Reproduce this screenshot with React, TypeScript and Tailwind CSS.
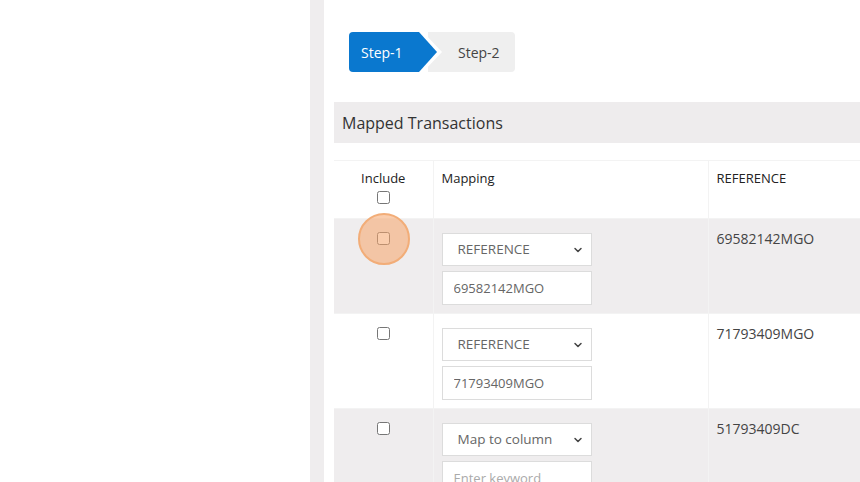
import { ChevronDown } from "lucide-react";

type Row = {
  mapping: string;
  keyword: string;
  reference: string;
  shaded: boolean;
};

const ROWS: Row[] = [
  { mapping: "REFERENCE", keyword: "69582142MGO", reference: "69582142MGO", shaded: true },
  { mapping: "REFERENCE", keyword: "71793409MGO", reference: "71793409MGO", shaded: false },
  { mapping: "Map to column", keyword: "", reference: "51793409DC", shaded: true },
];

function Stepper() {
  return (
    <div className="flex h-10 w-[166px]">
      <div className="relative z-10 h-10 w-[93px] shrink-0 bg-white [clip-path:polygon(0_0,calc(100%-19px)_0,100%_50%,calc(100%-19px)_100%,0_100%)]">
        <div className="flex h-10 w-[88px] items-center rounded-l-[4px] bg-[#0a78cf] pl-3 text-[14px] text-white [clip-path:polygon(0_0,calc(100%-18px)_0,100%_50%,calc(100%-18px)_100%,0_100%)]">
          Step-1
        </div>
      </div>
      <div className="-ml-[14px] flex h-10 flex-1 items-center rounded-r-[4px] bg-[#efefef] pl-[30px] text-[14px] text-[#444]">
        Step-2
      </div>
    </div>
  );
}

function Checkbox() {
  return <input type="checkbox" className="m-0 h-[13px] w-[13px] align-middle" />;
}

export default function App() {
  return (
    <div className="flex h-[482px] w-[860px] overflow-hidden bg-white font-['Open_Sans',sans-serif]">
      <div className="w-[310px] shrink-0 bg-white" />
      <div className="w-[14px] shrink-0 bg-[#efedee]" />
      <div className="min-w-0 flex-1 pl-[10px] pt-8">
        <div className="pl-[15px]">
          <Stepper />
        </div>

        <div className="mt-[30px] flex h-[41px] w-[600px] items-center bg-[#eeeced] pl-2 text-[16px] text-[#333]">
          Mapped Transactions
        </div>

        <table className="mt-[17px] w-[700px] table-fixed border-collapse text-[13px] text-[#222]">
          <colgroup>
            <col className="w-[99px]" />
            <col className="w-[275px]" />
            <col />
          </colgroup>
          <thead>
            <tr className="h-[58px] border-t border-[#f3f3f3]">
              <th className="border-r border-[#f3f3f3] pt-[8px] align-top font-normal">
                <div className="leading-[18px]">Include</div>
                <div className="mt-[2px] leading-[14px]">
                  <Checkbox />
                </div>
              </th>
              <th className="border-r border-[#f3f3f3] pl-2 pt-[8px] text-left align-top font-normal leading-[18px]">
                Mapping
              </th>
              <th className="pl-2 pt-[8px] text-left align-top font-normal leading-[18px]">
                REFERENCE
              </th>
            </tr>
          </thead>
          <tbody>
            {ROWS.map((row, i) => (
              <tr
                key={row.reference}
                className={`h-[95px] border-t border-[#f3f3f3] ${row.shaded ? "bg-[#efedee]" : "bg-white"}`}
              >
                <td className="relative border-r border-[#f3f3f3] pt-[11px] text-center align-top leading-[14px]">
                  <Checkbox />
                  {i === 0 && (
                    <span className="pointer-events-none absolute left-[24px] top-[-6px] h-[52px] w-[52px] rounded-full border-2 border-[#f2ad78] bg-[#f5a46a]/55" />
                  )}
                </td>
                <td className="border-r border-[#f3f3f3] pl-[8px] pt-[14px] align-top">
                  <div className="relative h-[33px] w-[150px] border border-[#dcdcdc] bg-white">
                    <select
                      defaultValue={row.mapping}
                      className="h-full w-full appearance-none bg-transparent pl-[15px] text-[13.5px] text-[#666] outline-none"
                    >
                      <option>{row.mapping}</option>
                    </select>
                    <ChevronDown
                      size={12}
                      strokeWidth={3}
                      className="pointer-events-none absolute right-[7px] top-[10px] text-[#444]"
                    />
                  </div>
                  <input
                    defaultValue={row.keyword}
                    placeholder="Enter keyword"
                    className="mt-[5px] h-[34px] w-[150px] border border-[#dcdcdc] bg-white pl-[11px] text-[13px] text-[#666] outline-none placeholder:text-[#aaa]"
                  />
                </td>
                <td className="pl-2 pt-[9px] align-top text-[14px] text-[#444]">{row.reference}</td>
              </tr>
            ))}
          </tbody>
        </table>
      </div>
    </div>
  );
}
